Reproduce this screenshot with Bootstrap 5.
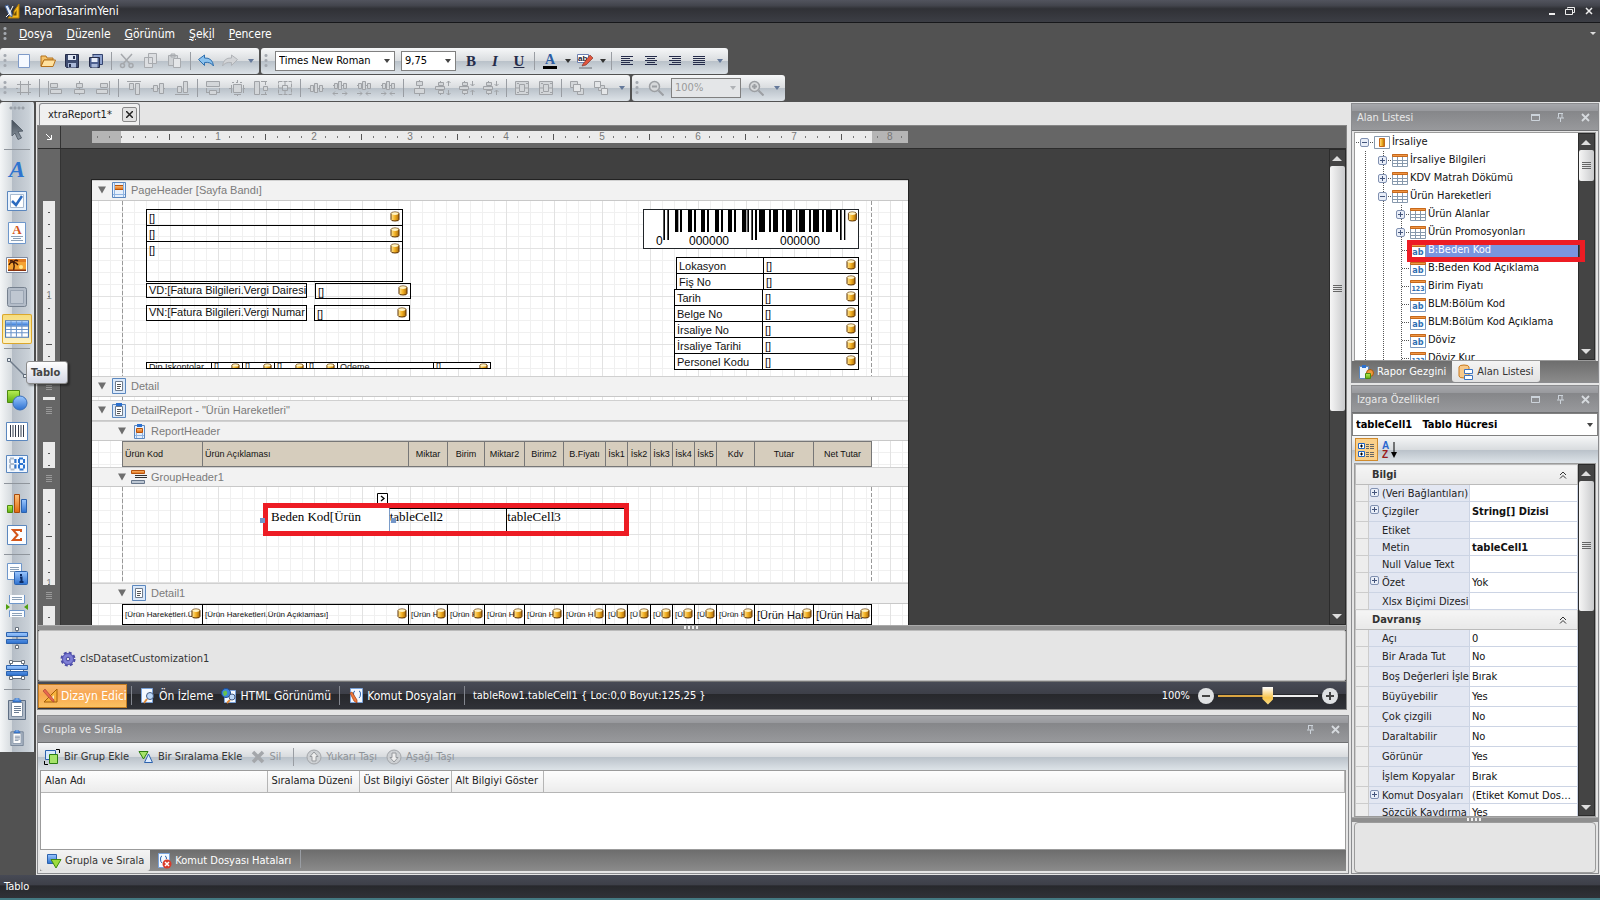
<!DOCTYPE html>
<html lang="tr">
<head>
<meta charset="utf-8">
<meta name="viewport" content="width=device-width, initial-scale=1">
<title>RaporTasarimYeni</title>
<link href="https://cdn.jsdelivr.net/npm/bootstrap@5.3.0/dist/css/bootstrap.min.css" rel="stylesheet">
<style>
:root{--ui:"DejaVu Sans Condensed","Noto Sans",sans-serif;--bar:linear-gradient(#f6f7f8,#d9dcdf 50%,#b9c1c9 51%,#dde3e8);--darkbar:linear-gradient(#474a55,#3d3f48 45%,#27282c 46%,#303238)}
body{font-family:var(--ui);font-size:11px;line-height:16px;color:#222;background:#525252;height:100vh;overflow:hidden}
svg{display:block;flex:none}
.minh0{min-height:0}.minw0{min-width:0}
.i16{width:16px;height:16px}.i22{width:22px;height:22px}.i24{width:24px;height:24px}.i14{width:14px;height:14px}
.app-title,.menu-row,.tool-row,.status,.tabstrip,.ruler-row,.split,.tray,.modes,.grouping,.fields,.phead,.btnbar,.desc,.ptabs,.objsel{flex:none}
.app-title{height:23px;background:linear-gradient(#52545e,#43454d 25%,#303136 40%,#3c3e45);border-bottom:1px solid #17181b;color:#fff;font-size:12px}
.menu-row{height:25px;background:#525252;font-size:12px}
.menu-row a{color:#fff;text-decoration:none;padding:0 7px}
.tool-row{height:27px;gap:2px}
.tb{height:26px;background:var(--bar);border-radius:3px}
.tb .btn,.toolbox .btn{padding:0;border:0;border-radius:2px;width:24px;height:24px;display:flex;align-items:center;justify-content:center;color:#252c4a;font-family:"Liberation Serif",serif;font-size:15px;line-height:20px;font-weight:700}
.tb .drop{width:11px}.tb .more{width:17px}
.grip{width:12px;flex:none;height:16px;background:radial-gradient(circle,#a4a9b0 1px,transparent 2px) 3px 0/4px 5px repeat-y}
.grip14{width:14px}
.vsep{width:7px;height:18px;flex:none;background:linear-gradient(#999da3,#999da3) 3px 0/1px 100% no-repeat}
.sel{appearance:none;border:1px solid #808080;border-radius:0;background:#fff url("data:image/svg+xml,%3Csvg xmlns='http://www.w3.org/2000/svg' width='6' height='4'%3E%3Cpath d='M0 0h6L3 4z' fill='%23444'/%3E%3C/svg%3E") no-repeat right 4px center;font:11px/16px var(--ui);color:#000;padding:0 14px 0 3px;height:20px;outline:0}
.sel.dim{background:#e4e6e8 url("data:image/svg+xml,%3Csvg xmlns='http://www.w3.org/2000/svg' width='6' height='4'%3E%3Cpath d='M0 0h6L3 4z' fill='%23b0b3b7'/%3E%3C/svg%3E") no-repeat right 4px center;color:#9a9a9a}
.w120{width:120px}.w55{width:55px;margin:0 3px 0 6px}.w70{width:70px;margin:0 3px}
.toolbox{width:36px;height:650px;background:linear-gradient(90deg,#f4f6f7,#d5dade 35%,#b5bdc6 36%,#cad1d8 85%,#dfe5ea);border-right:2px solid #4d4d4d;border-radius:3px 3px 0 0;flex:none}
.toolbox .btn{width:30px;height:30px;margin:1px 0 1px 2px;flex:none}
.toolbox .btn.last{height:24px}
.toolbox .btn.on{background:linear-gradient(#f6dc7c,#fff3c4);box-shadow:inset 0 0 0 1px #dba72c}
.hgrip{height:12px;flex:none;background:radial-gradient(circle,#99a0a8 1px,transparent 2px) 0 4px/4px 4px repeat-x;width:16px;margin-left:9px}
.hsep{height:7px;flex:none;margin:0 4px;background:linear-gradient(#8f959c,#8f959c) 0 3px/100% 1px no-repeat}
.work{background:#e5e5e5}
.center{padding:0 2px 1px 1px}
.tabstrip{height:23px;padding-left:2px}
.doctab{width:101px;height:22px;background:#f0f0f0;border:1px solid #8a8c90;border-bottom:0;border-radius:3px 3px 0 0;padding:0 2px 0 8px;margin-top:1px}
.doctab .btn{padding:0;width:15px;height:15px;border:1px solid #888;border-radius:2px;background:#e2e2e2;display:flex;align-items:center;justify-content:center}
.docframe{border:1px solid #858585;background:#404040;margin-right:2px}
.ruler-row{height:23px;background:#666;border-bottom:1px solid #2c2c2c}
.corner{width:23px;background:#777;border-right:1px solid #333;flex:none}
.hrule{margin-left:31px;width:816px;height:12px;color:#777;font:10px/12px "Liberation Sans",sans-serif;padding-left:78px;background:linear-gradient(90deg,transparent 47px,#555 47px,#555 48px,transparent 48px) 30px 3px/96px 6px repeat-x,linear-gradient(90deg,transparent 11px,#777 11px) 30px 5px/12px 2px repeat-x,linear-gradient(90deg,#b5b5b5 29px,#ebebeb 29px,#ebebeb 780px,#b5b5b5 780px)}
.hrule span{width:96px;text-align:center;flex:none}
.hrule b{font-weight:400;background:#ebebeb;padding:0 2px}
.hrule span:last-child{width:60px;text-align:left;padding-left:43px}.hrule span:last-child b{background:#b5b5b5}
.vrule{width:23px;background:#666;border-right:1px solid #333;flex:none;padding:52px 5px 0;overflow:hidden}
.vseg{width:12px;color:#888;font:10px/12px "Liberation Sans",sans-serif;text-align:center;overflow:hidden;background:linear-gradient(transparent 47px,#555 47px,#555 48px,transparent 48px) 3px 0/6px 96px repeat-y,linear-gradient(transparent 11px,#555 11px) 5px 0/2px 12px repeat-y,#ebebeb}
.vseg b{display:block;font-weight:400;padding-top:89px}
.ham{width:6px;margin:0 3px;background:repeating-linear-gradient(#999 0 1px,transparent 1px 2px) center/6px 7px no-repeat}
.z175{height:175px}.z21{height:21px}.z3{height:3px}.z26{height:26px}.z96{height:96px}
.canvas{background:#404040;overflow:hidden}
.sheet{width:816px;margin:31px 0 0 31px;background:#fff;box-shadow:0 0 0 1px #222;font-family:"Liberation Sans",sans-serif;color:#111}
.band{height:21px;background:#f2f2f2;border-bottom:1px solid #c8c8c8;border-top:1px solid #d0d0d0;padding:0 0 1px 6px;color:#7b7b7b;font-size:11px;line-height:18px;display:flex;align-items:center;gap:5px}
.band .i16{margin-right:-1px}
.band.sub{padding-left:26px}
.b20{height:20px}
.zone{position:relative;background:repeating-linear-gradient(#999 0 4px,transparent 4px 6px) 30px 0/1px 100% no-repeat,repeating-linear-gradient(#999 0 4px,transparent 4px 6px) 779px 0/1px 100% no-repeat,linear-gradient(90deg,#e2e2e2 1px,transparent 1px) 30px 0/48px 48px,linear-gradient(transparent 47px,#e2e2e2 47px) 0 0/48px 48px,linear-gradient(90deg,#f0f0f0 1px,transparent 1px) 30px 0/12px 12px,linear-gradient(transparent 11px,#f0f0f0 11px) 0 0/12px 12px,#fff}
.ctl{position:absolute;border:1px solid #000;display:flex;justify-content:space-between;align-items:flex-start;padding:1px 2px;overflow:hidden;white-space:nowrap;font-size:11px;line-height:14px}
.ctl.tight{padding:0 0 0 2px;line-height:12px}
.ctl svg,.info svg{width:10px;height:11px}
.dip{border:1px solid #000;height:7px;overflow:hidden;background:#fff}
.dc{font-size:9px;line-height:8px;border-right:1px solid #000;display:flex;justify-content:space-between;padding:0 2px;white-space:nowrap;overflow:hidden}
.dc:last-child{border-right:0}.dc svg{width:9px;height:10px}
.rtab{table-layout:fixed;width:749px;margin-left:30px;border-collapse:collapse}
.rtab td,.rtab th{border:1px solid #000;padding:0 2px;overflow:hidden;white-space:nowrap;font-weight:400;vertical-align:middle;text-align:center;font-size:9px;line-height:14px}
.rtab th{background:#d6cdbd;border-color:#777;height:25px}
.rtab th:nth-child(n+8){padding:0}
.rtab th:nth-child(-n+2),.rtab td{text-align:left}
.rtab td{height:20px;font-size:8px;padding:0 1px 0 2px}
.rtab td:nth-last-child(-n+2){font-size:11px}
.rtab td svg{width:10px;height:11px;margin-left:-10px;position:relative}
.rtab td .d-flex span{overflow:hidden;min-width:0}
.rtab col:nth-child(1){width:80px}.rtab col:nth-child(2){width:206px}.rtab col:nth-child(3),.rtab col:nth-child(6){width:39px}.rtab col:nth-child(4){width:37px}.rtab col:nth-child(5){width:40px}.rtab col:nth-child(7){width:42px}.rtab col:nth-child(n+8){width:22px}.rtab col:nth-child(9){width:23px}.rtab col:nth-child(13){width:38px}.rtab col:nth-child(14){width:59px}.rtab col:nth-child(15){width:58px}
.info{table-layout:fixed;border-collapse:collapse;position:absolute;background:#fff;font-size:11px;line-height:14px}
.info td{border:1px solid #000;height:16px;padding:0 2px;overflow:hidden;white-space:nowrap}
.redbox{position:absolute;border:5px solid #ed1c24;z-index:3;pointer-events:none}
.tcells{position:absolute;left:176px;top:21px;width:356px;height:24px;font:13px/16px "Liberation Serif",serif;color:#000}
.tcells div{width:118px;border-top:1px solid #000;border-left:1px solid #000;white-space:nowrap}
.tcells div:first-child{width:121px;background:#fff;border-color:#fff;padding-left:2px}
.tcells div:nth-child(2){border-left-color:#7a9cc9}
.hnd{position:absolute;width:5px;height:5px;background:#7396c8;z-index:4}
.sb{width:17px;background:#444;border:1px solid #2b2b2b;flex:none}
.sb .arr{height:16px;display:flex;align-items:center;justify-content:center}
.thumb{background:linear-gradient(90deg,#f6f6f6,#c9cacc);border-radius:2px;display:flex;align-items:center;justify-content:center}
.thumb::after{content:"";width:9px;height:8px;background:repeating-linear-gradient(#666 0 1px,transparent 1px 2px)}
.t245{height:245px}.t31{height:31px}.t130{height:130px}
.split{height:5px;background:#8f8f8f;border-top:1px solid #aaa}
.split i{display:block;width:16px;height:3px;margin:0 auto;background:repeating-linear-gradient(90deg,#eee 0 2px,transparent 2px 4px)}
.tray{height:51px;background:#e5e5e5;border:1px solid #bbb;border-radius:2px;padding:20px 0 0 21px;color:#333}
.modes{height:28px;background:var(--darkbar);color:#fff;border-top:1px solid #777}
.modes .btn{padding:0;border:0;border-radius:0;color:#fff;font:12px/16px var(--ui);display:flex;align-items:center;gap:3px;white-space:nowrap}
.modes .btn.on{background:linear-gradient(#f6b877,#f8a64e 45%,#fbc463);box-shadow:inset 0 0 0 1px #c47d22;height:24px;width:89px;padding-left:4px}
.modes .bar{width:1px;height:19px;background:#83868e}
.modes .round{width:16px;height:16px;border-radius:50%;background:#dfe1e3;justify-content:center}
.zoomr{appearance:none;width:100px;height:20px;margin:0;background:linear-gradient(90deg,#d9a441 50%,#eee 50%) center/100% 2px no-repeat}
.zoomr::-webkit-slider-thumb{appearance:none;width:11px;height:18px;background:linear-gradient(#fff,#f7c44a 60%,#fbe08e);clip-path:polygon(0 0,100% 0,100% 70%,50% 100%,0 70%)}
.pane{border:1px solid #8b8c8f;background:#e5e5e5}
.phead{height:27px;background:linear-gradient(#a6a7ab,#999a9e 25%,#858689 26%,#98999c);border-bottom:1px solid #6f7072;color:#e9e9e9;padding:1px 8px 0 5px}
.btnbar{height:27px;background:var(--bar);color:#333}
.btnbar .btn{padding:0;border:0;font:11px/16px var(--ui);color:#333;display:flex;gap:4px;align-items:center;border-radius:0}
.btnbar .btn:disabled{color:#8f9398;opacity:1}
.btnbar .sorton{background:#fbd08a;box-shadow:0 0 0 1px #d08a2c;width:21px;height:21px;justify-content:center}
.actions{gap:9px;padding-left:6px}
.inset{border:1px solid #9b9b9b;margin:0 2px}
.grouping{height:159px;margin-top:5px}
.grp{border-collapse:collapse;width:100%;table-layout:fixed}
.grp th{height:21px;font-weight:400;border:1px solid #b5b5b5;border-left:0;border-top:0;background:linear-gradient(#fdfdfd,#ececec);padding:0 4px;white-space:nowrap}
.grp th:nth-child(1){width:226px}.grp th:nth-child(2),.grp th:nth-child(3),.grp th:nth-child(4){width:92px}
.ptabs{background:linear-gradient(#6d6d6d,#8b8b8b)}
.grouping .ptabs{margin:0 2px 2px}
.ptabs .btn{padding:0 6px;border:0;font:11px/16px var(--ui);color:#fff;display:flex;gap:3px;align-items:center;height:21px;border-radius:0 0 3px 3px;white-space:nowrap}
.ptabs .btn.on{background:linear-gradient(#f4f4f4,#e2e2e2);color:#333}
.side{width:249px;flex:none;padding:1px 1px 1px 0}
.fields{height:280px;margin-bottom:2px}
.treebox{margin-top:1px}
.tree{list-style:none;margin:0;padding:0 0 0 1px;background:#fff;overflow:hidden;color:#111}
.tree li{display:flex;height:18px;align-items:center;white-space:nowrap}
.tree i{width:18px;height:18px;flex:none;display:flex;align-items:center;justify-content:center}
.tree .v{background:linear-gradient(#555 50%,transparent 50%) 9px 0/1px 2px repeat-y}
.tree .h{background:linear-gradient(90deg,#555 50%,transparent 50%) 10px 9px/2px 1px repeat-x}
.tree .vh{background:linear-gradient(#555 50%,transparent 50%) 9px 0/1px 2px repeat-y,linear-gradient(90deg,#fff 9px,transparent 9px) 0 9px/100% 1px,repeating-linear-gradient(90deg,#555 0 1px,#fff 1px 2px) 0 9px/100% 1px no-repeat}
.tree svg.i16{width:16px}
.tree span{padding-left:2px}
.tree .chosen{background:#7a95df;color:#fff;flex:1;line-height:14px}
.objsel{height:23px;font-weight:700}
.desc{height:51px}
.pg{table-layout:fixed;border-collapse:collapse;width:100%;color:#111;line-height:15px}
.pg td,.pg th{padding:0 2px;border:1px solid #ccd4e4;overflow:hidden;white-space:nowrap;text-overflow:ellipsis;vertical-align:middle;font-weight:400;text-align:left}
.pg .ind{background:#ededed;border-color:#ccc}
.pg th{background:#e3e7f2;padding:0 0 0 13px;text-overflow:clip;position:relative;color:#222}
.pg th svg{position:absolute;left:1px;top:3px}
.pg .cat td{background:linear-gradient(#f5f5f5,#e9e9e9);border-color:#bbb;font-weight:700;color:#333;padding-left:16px}
.pg col:nth-child(1){width:13px}.pg col:nth-child(2){width:101px}
.r17{height:17px}.r20{height:20px}
.status{height:25px;background:var(--darkbar);border-bottom:2px solid #447a83;color:#fff;padding:4px}
.tip{position:absolute;left:26px;top:259px;z-index:5;background:linear-gradient(#fff,#d3d7e4);border:1px solid #8b8b8b;border-radius:3px;font-weight:700;color:#444;padding:3px 4px;width:42px;box-shadow:2px 2px 2px #0005;height:23px}
</style>
</head>
<body class="d-flex flex-column">
<svg width="0" height="0" class="position-absolute" aria-hidden="true">
<defs>
<linearGradient id="gb" x2="0" y2="1"><stop stop-color="#9cc8ff"/><stop offset="1" stop-color="#2c70cf"/></linearGradient>
<linearGradient id="gy"><stop stop-color="#ffe79a"/><stop offset=".5" stop-color="#f3b021"/><stop offset="1" stop-color="#a8690b"/></linearGradient>
<linearGradient id="go" x2="0" y2="1"><stop stop-color="#ffc27a"/><stop offset="1" stop-color="#df6a10"/></linearGradient>
<linearGradient id="gg" x2="0" y2="1"><stop stop-color="#b8ef55"/><stop offset="1" stop-color="#5fae12"/></linearGradient>
<linearGradient id="ga" x2="0" y2="1"><stop stop-color="#3f4954"/><stop offset="1" stop-color="#8f99a4"/></linearGradient>
</defs>
<symbol id="db" viewBox="0 0 10 11"><path d="M1 2.500Q1 1 5 1t4 1.500v6Q9 10 5 10T1 8.500z" fill="url(#gy)" stroke="#5c3306"/><ellipse cx="5" cy="2.600" rx="3.400" ry="1.300" fill="#fff3c4"/></symbol>
<symbol id="tri" viewBox="0 0 8 8"><path d="M0 0.500h8L4 7.500z" fill="#6e6e6e"/></symbol>
<symbol id="car" viewBox="0 0 6 4"><path d="M0 0h6L3 4z" fill="#333"/></symbol>
<symbol id="carb" viewBox="0 0 6 4"><path d="M0 0h6L3 4z" fill="#64789a"/></symbol>
<symbol id="up" viewBox="0 0 10 5"><path d="M0 5h10L5 0z" fill="#ddd"/></symbol>
<symbol id="dn" viewBox="0 0 10 5"><path d="M0 0h10L5 5z" fill="#ddd"/></symbol>
<symbol id="logo" viewBox="0 0 16 16"><path d="M15 1v14H4l3-3h3V8z" fill="#f5b81c" stroke="#b47b05"/><path d="M12.500 7v5.500H9.500z" fill="#6b4a05"/><path d="m1 3 3-1 4 9v3l-3-2z" fill="#dfe9f5" stroke="#3d5c93"/><path d="m9 3-4 8-3 3" stroke="#fff" fill="none"/></symbol>
<symbol id="new" viewBox="0 0 16 16"><path d="M2.500 1.500h11v13h-11z" fill="#f5f9ff" stroke="#7e9ac8"/></symbol>
<symbol id="open" viewBox="0 0 16 16"><path d="M1 13V3h5l1 2h6v2H4z" fill="#f5c36a" stroke="#b5721c"/><path d="M1 13.500 4 7h11.500L13 13.500z" fill="#ffe2a0" stroke="#b5721c"/></symbol>
<symbol id="save" viewBox="0 0 16 16"><path d="M1.500 1.500h13v13h-12l-1-1z" fill="#3e4c70" stroke="#252c48"/><path d="M4 2h8v5H4z" fill="#dfe6f3"/><path d="M9 3h2v3H9z" fill="#26304e"/><path d="M4 10h8v4.500H4z" fill="#a9b8d8"/><path d="M5 11h2v3H5z" fill="#26304e"/></symbol>
<symbol id="saveall" viewBox="0 0 16 16"><path d="M4.500 1.500h10v10H12M5 4V1.500" fill="#8fa3cf" stroke="#33436e"/><path d="M1.500 4.500h10v10h-9l-1-1z" fill="#4d6090" stroke="#252c48"/><path d="M3.500 5h6v4h-6z" fill="#e7edf8"/><path d="M3.500 11h6v3.500h-6z" fill="#a9b8d8"/></symbol>
<symbol id="cut" viewBox="0 0 16 16"><path d="m2 1 9 10M13 1 4 11" stroke="#a5a8ac" stroke-width="1.500"/><circle cx="3.500" cy="12.500" r="2" fill="none" stroke="#a5a8ac" stroke-width="1.500"/><circle cx="12" cy="12.500" r="2" fill="none" stroke="#a5a8ac" stroke-width="1.500"/></symbol>
<symbol id="copy" viewBox="0 0 16 16"><path d="M5.500.5h8v10h-8zM1.500 4.500h8v10h-8z" fill="#dcdee1" stroke="#a8abaf"/></symbol>
<symbol id="paste" viewBox="0 0 16 16"><path d="M1.500 2.500h9v10h-9zM4 1h4v3H4z" fill="#cfd2d5" stroke="#a8abaf"/><path d="M6.500 5.500h7v9h-7z" fill="#e4e6e8" stroke="#a8abaf"/></symbol>
<symbol id="undo" viewBox="0 0 16 16"><path d="m.5 6.500 6-4.500v3q8-.5 9 8-3-4.500-9-3.500v3z" fill="#8bc2ee" stroke="#2e6fae"/></symbol>
<symbol id="redo" viewBox="0 0 16 16"><path d="m15.500 6.500-6-4.500v3q-8-.5-9 8 3-4.500 9-3.500v3z" fill="#d2d4d7" stroke="#b0b3b7"/></symbol>
<symbol id="al" viewBox="0 0 14 14"><path d="M1 2.500h12M1 4.500h9M1 6.500h12M1 8.500h9M1 10.500h12" stroke="#252c4a"/></symbol>
<symbol id="ac" viewBox="0 0 14 14"><path d="M1 2.500h12M3 4.500h8M1 6.500h12M3 8.500h8M1 10.500h12" stroke="#252c4a"/></symbol>
<symbol id="ar" viewBox="0 0 14 14"><path d="M1 2.500h12M4 4.500h9M1 6.500h12M4 8.500h9M1 10.500h12" stroke="#252c4a"/></symbol>
<symbol id="aj" viewBox="0 0 14 14"><path d="M1 2.500h12M1 4.500h12M1 6.500h12M1 8.500h12M1 10.500h12" stroke="#252c4a"/></symbol>
<symbol id="g1" viewBox="0 0 16 16"><g fill="#d3d6d9" stroke="#a0a3a7"><path d="M4.500 4.500h8v8h-8z"/><path d="M4.500 1v14M12.500 1v14M1 4.500h14M1 12.500h14M0 8.500h2"/></g></symbol>
<symbol id="g2" viewBox="0 0 16 16"><g fill="#d3d6d9" stroke="#a0a3a7"><path d="M1.500 1v14"/><path d="M3.500 3.500h7v4h-7zM3.500 9.500h11v4h-11z"/></g></symbol>
<symbol id="g3" viewBox="0 0 16 16"><g fill="#d3d6d9" stroke="#a0a3a7"><path d="M8.500 1v14"/><path d="M5.500 3.500h6v4h-6zM3.500 9.500h10v4h-10z"/></g></symbol>
<symbol id="g4" viewBox="0 0 16 16"><g fill="#d3d6d9" stroke="#a0a3a7"><path d="M14.500 1v14"/><path d="M5.500 3.500h7v4h-7zM1.500 9.500h11v4h-11z"/></g></symbol>
<symbol id="g5" viewBox="0 0 16 16"><g fill="#d3d6d9" stroke="#a0a3a7"><path d="M1 1.500h14"/><path d="M3.500 3.500h4v6h-4zM9.500 3.500h4v11h-4z"/></g></symbol>
<symbol id="g6" viewBox="0 0 16 16"><g fill="#d3d6d9" stroke="#a0a3a7"><path d="M1 8.500h14"/><path d="M3.500 5.500h4v6h-4zM9.500 3.500h4v10h-4z"/></g></symbol>
<symbol id="g7" viewBox="0 0 16 16"><g fill="#d3d6d9" stroke="#a0a3a7"><path d="M1 14.500h14"/><path d="M3.500 6.500h4v6h-4zM9.500 1.500h4v11h-4z"/></g></symbol>
<symbol id="g8" viewBox="0 0 16 16"><g fill="#d3d6d9" stroke="#a0a3a7"><path d="M1.500 1.500h13v5h-13zM4.500 10.500h7v4h-7z"/><path d="M1.500 8v5M14.500 8v5M2 12.500h2M12 12.500h2"/></g></symbol>
<symbol id="g9" viewBox="0 0 16 16"><g fill="#d3d6d9" stroke="#a0a3a7"><path d="M4.500 4.500h8v8h-8z"/><path d="M3 2.500h2m2 0h2m2 0h2M8.500 0v3m0 11v2M0 8.500h3m11 0h2M2.500 5v8M14.500 5v8M5 14.500h7"/></g></symbol>
<symbol id="g10" viewBox="0 0 16 16"><g fill="#d3d6d9" stroke="#a0a3a7"><path d="M1.500 1.500h5v13h-5zM10.500 6.500h4v4h-4z"/><path d="M8 1.500h6M8 14.500h6M12.500 2v3m0 7v2"/></g></symbol>
<symbol id="g11" viewBox="0 0 16 16"><g fill="none" stroke="#a0a3a7"><path d="M1.500 1.500h13v13h-13z" stroke-dasharray="4 1"/><path d="M5.500 5.500h5v5h-5zM8 2v3M8 11v3M2 8h3M11 8h3"/></g></symbol>
<symbol id="g12" viewBox="0 0 16 16"><g fill="#d3d6d9" stroke="#a0a3a7"><path d="M0 8.500h16"/><path d="M2.500 5.500h3v6h-3zM6.500 3.500h3v9h-3zM11.500 5.500h3v6h-3z"/></g></symbol>
<symbol id="g13" viewBox="0 0 16 16"><g fill="#d3d6d9" stroke="#a0a3a7"><path d="M1 5.500h14"/><path d="M2.500 3.500h3v5h-3zM6.500 1.500h3v8h-3zM11.500 3.500h3v5h-3z"/><path d="M1 13.500h5m4 0h5M3 11.500l-2 2 2 2m10-4 2 2-2 2" fill="none"/></g></symbol>
<symbol id="g13b" viewBox="0 0 16 16"><g fill="#d3d6d9" stroke="#a0a3a7"><path d="M1 5.500h14"/><path d="M2.500 3.500h3v5h-3zM6.500 1.500h3v8h-3zM11.500 3.500h3v5h-3z"/><path d="M1 13.500h5m4 0h5M4 11.500l2 2-2 2m8-4-2 2 2 2" fill="none"/></g></symbol>
<symbol id="g14" viewBox="0 0 16 16"><g fill="#d3d6d9" stroke="#a0a3a7"><path d="M8.500 0v16"/><path d="M5.500 1.500h6v4h-6zM3.500 8.500h10v5h-10z"/></g></symbol>
<symbol id="g15" viewBox="0 0 16 16"><g fill="#d3d6d9" stroke="#a0a3a7"><path d="M5.500 1v14"/><path d="M3.500 2.500h5v3h-5zM.5 6.500h9v3h-9zM3.500 10.500h5v3h-5z"/><path d="M13.500 1v5m0 4v5m-2-12 2-2 2 2m-4 10 2 2 2-2" fill="none"/></g></symbol>
<symbol id="g15b" viewBox="0 0 16 16"><g fill="#d3d6d9" stroke="#a0a3a7"><path d="M5.500 1v14"/><path d="M3.500 2.500h5v3h-5zM.5 6.500h9v3h-9zM3.500 10.500h5v3h-5z"/><path d="M13.500 1v5m0 4v5m-2-11 2 2 2-2m-4 8 2-2 2 2" fill="none"/></g></symbol>
<symbol id="g16" viewBox="0 0 16 16"><g fill="#d3d6d9" stroke="#a0a3a7"><path d="M1.500 1.500h13v13h-13z"/><path d="M5.500 4.500h5v7h-5zM3 3.500h2m7 0h2M3 12.500h2m7 0h2M2 8h3m6 0h3"/></g></symbol>
<symbol id="g17" viewBox="0 0 16 16"><g fill="#d3d6d9" stroke="#a0a3a7"><path d="M1.500 1.500h7v6h-7zM8.500 8.500h6v6h-6z"/><path d="M4.500 4.500h7v7h-7z" fill="#e4e6e8"/></g></symbol>
<symbol id="g18" viewBox="0 0 16 16"><g fill="#d3d6d9" stroke="#a0a3a7"><path d="M5.500 5.500h6v5h-6z"/><path d="M1.500 1.500h6v6h-6zM8.500 8.500h6v6h-6z" fill="#e4e6e8"/></g></symbol>
<symbol id="zo" viewBox="0 0 16 16"><circle cx="6.500" cy="6.500" r="5" fill="#d6d8da" stroke="#9c9fa3" stroke-width="1.500"/><path d="M4 6.500h5M10.500 10.500l5 5" stroke="#9c9fa3" stroke-width="2"/></symbol>
<symbol id="zi" viewBox="0 0 16 16"><circle cx="6.500" cy="6.500" r="5" fill="#d6d8da" stroke="#9c9fa3" stroke-width="1.500"/><path d="M4 6.500h5M6.500 4v5M10.500 10.500l5 5" stroke="#9c9fa3" stroke-width="2"/></symbol>
<symbol id="t-arrow" viewBox="0 0 22 22"><path d="m6 1 11 11-5 .5 3.500 6.500-3.500 1.500-3-6.500-3 3z" fill="url(#ga)" stroke="#59636e"/></symbol>
<symbol id="t-check" viewBox="0 0 22 22"><path d="M1.500 1.500h19v19h-19z" fill="#eaf3fd" stroke="#5b87be"/><path d="M4.500 4.500h13v13h-13z" fill="#fff" stroke="#a9bbd0"/><path d="m6 11 4 4 6-9" fill="none" stroke="#2b6bc0" stroke-width="2.500"/></symbol>
<symbol id="t-label" viewBox="0 0 22 22"><path d="M2.500.5h17v21h-17z" fill="#fbfdff" stroke="#6e97cb"/><path d="M5 14.500h12M7 16.500h8M5 18.500h12" stroke="#8ba0b7"/></symbol>
<symbol id="t-pic" viewBox="0 0 22 22"><path d="M.5 3.500h21v15H.5z" fill="#fff" stroke="#7e8aa0"/><path d="M2 5h18v12H2z" fill="#f5a233"/><path d="M2 5h18v3H2z" fill="#e07a20"/><path d="M7.500 17q1.500-5 0-9M3 11q2-4 4.500-2.500M4 7q3-1 3.500 1.500Q9 5 12 7M7.500 8.500Q10 8 12 11" stroke="#441a08" fill="none" stroke-width="1.400"/><path d="M2 15.500h18V17H2z" fill="#8b3410"/><circle cx="15" cy="13" r="2" fill="#ffe58a"/></symbol>
<symbol id="t-panel" viewBox="0 0 22 22"><rect x="1.500" y="1.500" width="19" height="19" rx="2" fill="#b3bcc8" stroke="#76818f"/><path d="M4.500 4.500h13v13h-13z" fill="#bfc7d1" stroke="#9aa5b3"/></symbol>
<symbol id="t-table" viewBox="0 0 22 22"><path d="M.5 3.500h21v15H.5z" fill="#fff" stroke="#4b78b5"/><path d="M1 4h20v4H1z" fill="url(#gb)"/><path d="M5.500 4v14M10.500 4v14M15.500 4v14M1 8.500h20M1 11.500h20M1 14.500h20" stroke="#6b94c9"/></symbol>
<symbol id="t-line" viewBox="0 0 22 22"><path d="m3 3 16 16" stroke="#6f7b89" stroke-width="1.500"/><path d="M1.500 1.500h3v3h-3zM17.500 17.500h3v3h-3z" fill="#e8edf2" stroke="#5d6977"/></symbol>
<symbol id="t-shape" viewBox="0 0 22 22"><path d="M1.500 1.500h12v12h-12z" fill="url(#gg)" stroke="#4c8a10"/><circle cx="14" cy="14" r="7" fill="url(#gb)" stroke="#3a6fb8"/></symbol>
<symbol id="t-bar" viewBox="0 0 22 22"><path d="M.5 1.500h21v18H.5z" fill="#fff" stroke="#5b87be"/><path d="M4.500 4v12M7 4v12M9.500 4v12M12.500 4v12M15 4v12M17.500 4v12" stroke="#333c4c"/></symbol>
<symbol id="t-zip" viewBox="0 0 22 22"><path d="M.5 2.500h21v17H.5z" fill="#f2f8ff" stroke="#5b87be"/><path d="M4 5.500h5v11H4zM4 11h5" fill="none" stroke="#aebccd" stroke-width="2" stroke-dasharray="4 1.500"/><path d="M13 5.500h5v11h-5zM13 11h5M9.500 6v10" fill="none" stroke="#2a73d0" stroke-width="2" stroke-dasharray="4 1.500"/></symbol>
<symbol id="t-chart" viewBox="0 0 22 22"><path d="M1.500 13.500h5v7h-5z" fill="url(#gg)" stroke="#4c8a10"/><path d="M8.500 2.500h5v18h-5z" fill="url(#go)" stroke="#a84a0a"/><path d="M15.500 7.500h5v13h-5z" fill="url(#gb)" stroke="#2c62ad"/></symbol>
<symbol id="t-sum" viewBox="0 0 22 22"><path d="M1.500 1.500h19v19h-19z" fill="#fbfdff" stroke="#5b87be"/><path d="M15 8V6H7l4.500 5L7 16h8v-2" fill="none" stroke="#d4561a" stroke-width="2"/></symbol>
<symbol id="t-info" viewBox="0 0 22 22"><path d="M1.500.5h14v16h-14z" fill="#fbfdff" stroke="#6e97cb"/><path d="M4 4.500h9M4 6.500h9M4 8.500h9" stroke="#8ba0b7"/><rect x="8.500" y="8.500" width="13" height="13" rx="1" fill="url(#gb)" stroke="#2c62ad"/><path d="M15 11v2M14 14.500h1.500V19M13.500 19h4" stroke="#0c2c66" stroke-width="2" fill="none"/></symbol>
<symbol id="t-break" viewBox="0 0 22 22"><path d="M3.500 0v8.500h15V0M3.500 22v-6.500h15V22" fill="#fbfdff" stroke="#6e97cb"/><path d="M6 2.500h10M6 4.500h10M6 18.500h10M6 20.500h10" stroke="#8ba0b7"/><path d="m0 9 4 3-4 3zM22 9l-4 3 4 3z" fill="#50a010"/></symbol>
<symbol id="t-xl" viewBox="0 0 22 22"><path d="M11 0v22" stroke="#66707c"/><path d="M.5 5.500h21v4H.5zM.5 12.500h21v4H.5z" fill="url(#gb)" stroke="#2c62ad"/><path d="M9.500.5h3v3h-3zM9.500 18.500h3v3h-3z" fill="#fff" stroke="#66707c"/></symbol>
<symbol id="t-xb" viewBox="0 0 22 22"><path d="M4.500 2.500h13v17h-13z" fill="#fff" stroke="#66707c"/><path d="M.5 6.500h21v4H.5zM.5 12.500h21v4H.5z" fill="url(#gb)" stroke="#2c62ad"/><path d="M3.500 1.500h3v3h-3zM15.500 1.500h3v3h-3zM3.500 17.500h3v3h-3zM15.500 17.500h3v3h-3z" fill="#fff" stroke="#66707c"/></symbol>
<symbol id="t-sub" viewBox="0 0 22 22"><path d="M2.500 2.500h17v19h-17z" fill="#aeb9c7" stroke="#5f6f84"/><path d="M5.500 4.500h11v14h-11z" fill="#fff" stroke="#7c8ca0"/><path d="M8 8.500h7M8 10.500h7M8 12.500h7M8 14.500h5" stroke="#6a7c93"/><path d="M7 4h8V2h-2V0H9v2H7z" fill="url(#gb)" stroke="#2c62ad" stroke-width=".6"/></symbol>
<symbol id="page" viewBox="0 0 16 16"><path d="M1.500.5h13v15h-13z" fill="#dbe9fa" stroke="#5b87be"/><path d="M4.500 3.500h7v9h-7z" fill="#fff" stroke="#6e7b8c"/><path d="M6 6.500h4M6 8.500h4M6 10.500h3" stroke="#555"/></symbol>
<symbol id="phd" viewBox="0 0 16 16"><path d="M1.500.5h13v15h-13z" fill="#e6f0fc" stroke="#5b87be"/><path d="M3.500 3.500h9v4h-9z" fill="url(#go)" stroke="#b7530c"/><path d="M3.500 1v14M12.500 1v14M2 12.500h12" stroke="#8fb4e2"/></symbol>
<symbol id="ghd" viewBox="0 0 16 16"><path d="M.5 1.500h13v3H.5z" fill="url(#go)" stroke="#b7530c"/><path d="M4 6.500h12M4 8.500h12" stroke="#333"/><path d="M.5 11.500h13v3H.5z" fill="#bcc6d2" stroke="#66758a"/></symbol>
<symbol id="clip" viewBox="0 0 16 16"><path d="M1.500 2.500h13v13h-13z" fill="#dbe9fa" stroke="#5b87be"/><path d="M4.500 4.500h7v9h-7z" fill="#fff" stroke="#6e7b8c"/><path d="M6 7.500h4M6 9.500h4M6 11.500h3" stroke="#555"/><path d="M5 1h6v3H5z" fill="#2c70cf"/></symbol>
<symbol id="clipo" viewBox="0 0 16 16"><path d="M3.500 2.500h10v13h-10z" fill="#e6f0fc" stroke="#5b87be"/><path d="M5.500 5.500h6v4h-6z" fill="url(#go)" stroke="#b7530c"/><path d="M5.500 10v5M11.500 10v5M4 12.500h9" stroke="#8fb4e2"/><path d="M6 1h5v3H6z" fill="#2c70cf"/></symbol>
<symbol id="tbl" viewBox="0 0 16 16"><path d="M.5 2.500h15v12H.5z" fill="#fff" stroke="#8799ad"/><path d="M.5 2.500h15v2H.5z" fill="url(#go)" stroke="#c8691a"/><path d="M5.500 5v9M10.500 5v9M1 8.500h14M1 11.500h14" stroke="#8799ad"/></symbol>
<symbol id="fld" viewBox="0 0 16 16"><path d="M.5 2.500h15v13H.5z" fill="#fff" stroke="#7d9ac0"/><path d="M.5 2.500h15v2H.5z" fill="url(#go)" stroke="#c8691a"/></symbol>
<symbol id="dsb" viewBox="0 0 16 16"><path d="M.5 2.500h15v12H.5z" fill="#fff" stroke="#8799ad"/><path d="M5.500 4.500h5v8h-5z" fill="url(#gy)" stroke="#c8691a"/></symbol>
<symbol id="ex+" viewBox="0 0 9 9"><rect x=".5" y=".5" width="8" height="8" rx="1.500" fill="#e9eef8" stroke="#8090b0"/><path d="M2 4.500h5M4.500 2v5" stroke="#44557c"/></symbol>
<symbol id="ex-" viewBox="0 0 9 9"><rect x=".5" y=".5" width="8" height="8" rx="1.500" fill="#e9eef8" stroke="#8090b0"/><path d="M2 4.500h5" stroke="#44557c"/></symbol>
<symbol id="pin" viewBox="0 0 9 9"><path d="M2.500 0v4.500M2 .5h5M6 0v5M1 5h7M4.500 5v4" stroke="#ccd3da" fill="none"/></symbol>
<symbol id="cls" viewBox="0 0 9 9"><path d="m1 1 7 7M8 1 1 8" stroke="#d6dade" stroke-width="1.800"/></symbol>
<symbol id="max" viewBox="0 0 9 9"><path d="M.5 1.500h8v6h-8z" fill="none" stroke="#ccd3da"/><path d="M0 2h9" stroke="#ccd3da" stroke-width="2"/></symbol>
<symbol id="chev" viewBox="0 0 8 8"><path d="m1 4 3-3 3 3M1 7.500l3-3 3 3" stroke="#333" fill="none"/></symbol>
<symbol id="gear" viewBox="0 0 16 16"><circle cx="8" cy="8" r="6" fill="#7f7fd6" stroke="#4d4da5" stroke-width="3" stroke-dasharray="2.700 2.012"/><circle cx="8" cy="8" r="5.500" fill="#7f7fd6" stroke="#5656b0"/><circle cx="8" cy="8" r="1.800" fill="#e5e5e5" stroke="#44449a"/></symbol>
<symbol id="design" viewBox="0 0 16 16"><path d="M15 1v13H2z" fill="#f7b23c" stroke="#a35e08"/><path d="m12 7-4 4h4z" fill="#ffe9c0"/><path d="m1 3 2-2 9 11v2l-2-1z" fill="#e8654d" stroke="#a84a3a" stroke-width=".7"/></symbol>
<symbol id="prev" viewBox="0 0 16 16"><path d="M1.500.5h11v14h-11z" fill="#f4f9ff" stroke="#7aa3dc"/><circle cx="10" cy="8" r="3.500" fill="#bcd8f8" stroke="#445a80"/><path d="m7 11-3 4" stroke="#dd8a3a" stroke-width="2"/></symbol>
<symbol id="html" viewBox="0 0 16 16"><path d="M3.500 2.500h11v12h-11z" fill="#f4f9ff" stroke="#7aa3dc"/><circle cx="5" cy="5" r="4.500" fill="#3d87dd" stroke="#1c4c95"/><path d="M2 4q3-3 4 0t-3 4z" fill="#67c14b"/><circle cx="11" cy="9" r="3" fill="#bcd8f8" stroke="#445a80"/><path d="m9 12-3 3" stroke="#dd8a3a" stroke-width="2"/></symbol>
<symbol id="scr" viewBox="0 0 16 16"><path d="M2.500.5h12v14h-12z" fill="#f4f9ff" stroke="#7aa3dc"/><path d="M7 3Q5.500 3 5.500 6T7 10M11 3q1.500 0 1.500 3T11 10" stroke="#2c62ad" fill="none"/><path d="m2 5 2-1 5 8v3l-3-2z" fill="#ef7a3d" stroke="#a33d0c" stroke-width=".7"/></symbol>
<symbol id="scre" viewBox="0 0 16 16"><path d="M2.500.5h11v14h-11z" fill="#f4f9ff" stroke="#7aa3dc"/><path d="M6 3Q4.500 3 4.500 6T6 10M9 3q1.500 0 1.500 3" stroke="#2c62ad" fill="none"/><circle cx="11" cy="11" r="4.500" fill="#d93a2b"/><path d="m9 9 4 4M13 9l-4 4" stroke="#fff" stroke-width="1.500"/></symbol>
<symbol id="addg" viewBox="0 0 16 16"><path d="M1.500 1.500h10v9h-10z" fill="#d6e8fb" stroke="#2c62ad"/><path d="M5.500 5.500h8v9h-8z" fill="#a5e36a" stroke="#2b7d10"/><path d="M12 .5h3.500V4M.5 12v3.500H4" stroke="#000" fill="none"/></symbol>
<symbol id="adds" viewBox="0 0 16 16"><path d="M1 2.500h9L5.500 10z" fill="#a5e36a" stroke="#2b7d10"/><path d="M6.500 13.500h8L10.500 5z" fill="#dcebff" stroke="#2c62ad"/></symbol>
<symbol id="delx" viewBox="0 0 14 14"><path d="m2 2 10 10M12 2 2 12" stroke="#a4a7ab" stroke-width="3.500"/></symbol>
<symbol id="cu" viewBox="0 0 16 16"><circle cx="8" cy="8" r="7" fill="#cdd0d3" stroke="#a3a6aa"/><path d="m8 3 4 4.500h-2V12H6V7.500H4z" fill="#eee" stroke="#96999d"/></symbol>
<symbol id="cd" viewBox="0 0 16 16"><circle cx="8" cy="8" r="7" fill="#cdd0d3" stroke="#a3a6aa"/><path d="m8 13 4-4.500h-2V4H6v4.500H4z" fill="#eee" stroke="#96999d"/></symbol>
<symbol id="grp" viewBox="0 0 16 16"><path d="M1.500 1.500h9v9h-9z" fill="url(#gb)" stroke="#2c62ad"/><path d="M5 6.500h10L10 15z" fill="#9edc3c" stroke="#3f8a0e"/></symbol>
<symbol id="rg" viewBox="0 0 16 16"><path d="M1.500 2.500h9v12h-9z" fill="#eef5fd" stroke="#5b87be"/><path d="M4 1h4v3H4z" fill="#2c70cf"/><circle cx="12" cy="9" r="3.500" fill="#f09a3c" stroke="#a8590e"/><path d="M7.500 9.500h5v5h-5z" fill="url(#gg)" stroke="#4c8a10"/></symbol>
<symbol id="fl" viewBox="0 0 16 16"><path d="M1 3q0-2 5-2t5 2v9q0 2-5 2t-5-2z" fill="#f8c98a" stroke="#c8791c"/><path d="M6.500 5.500h8v4h-8zM6.500 11.500h8v4h-8z" fill="#fff" stroke="#3d74c2"/></symbol>
<symbol id="catg" viewBox="0 0 18 18"><path d="M1.500 2.500h6v5h-6zM1.500 10.500h6v5h-6z" fill="#fff" stroke="#1f63c4"/><path d="M3 5h3M4.500 3.500v3M3 13h3M4.500 11.500v3" stroke="#000"/><path d="M9 3.500h3m1 0h4M9 5.500h3m1 0h4M9 7.500h3m1 0h4M9 11.500h3m1 0h4M9 13.500h3m1 0h4M9 15.500h3m1 0h4" stroke="#666"/></symbol>
</svg>

<header class="app-title d-flex align-items-center ps-1 pe-1">
  <svg width="16" height="16"><use href="#logo"/></svg>
  <span class="ps-1 flex-grow-1">RaporTasarimYeni</span>
  <svg width="50" height="12" viewBox="0 0 50 12" stroke="#eee" fill="none"><path d="M3 9h6" stroke-width="2"/><path d="M21.500 3.500v-1h7v5h-2M19.500 4.500h7v5h-7z"/><path d="m40 3 6 6M46 3l-6 6" stroke-width="1.500"/></svg>
</header>
<nav class="menu-row d-flex align-items-center pe-1 pb-1">
  <span class="grip"></span>
  <a href="#"><u>D</u>osya</a><a href="#"><u>D</u>üzenle</a><a href="#"><u>G</u>örünüm</a><a href="#"><u>Ş</u>ek<u>i</u>l</a><a href="#"><u>P</u>encere</a>
  <svg class="ms-auto" width="6" height="3"><use href="#dn"/></svg>
</nav>
<div class="tool-row d-flex">
  <div class="tb d-flex align-items-center">
    <span class="grip"></span>
    <button class="btn" aria-label="Yeni"><svg class="i16"><use href="#new"/></svg></button><button class="btn" aria-label="Aç"><svg class="i16"><use href="#open"/></svg></button><button class="btn" aria-label="Kaydet"><svg class="i16"><use href="#save"/></svg></button><button class="btn" aria-label="Tümünü kaydet"><svg class="i16"><use href="#saveall"/></svg></button>
    <span class="vsep"></span>
    <button class="btn" aria-label="Kes"><svg class="i16"><use href="#cut"/></svg></button><button class="btn" aria-label="Kopyala"><svg class="i16"><use href="#copy"/></svg></button><button class="btn" aria-label="Yapıştır"><svg class="i16"><use href="#paste"/></svg></button>
    <span class="vsep"></span>
    <button class="btn" aria-label="Geri al"><svg class="i16"><use href="#undo"/></svg></button><button class="btn" aria-label="Yinele"><svg class="i16"><use href="#redo"/></svg></button>
    <button class="btn more" aria-label="Seçenekler"><svg width="6" height="4"><use href="#carb"/></svg></button>
  </div>
  <div class="tb d-flex align-items-center">
    <span class="grip grip14"></span>
    <select class="sel w120" aria-label="Yazı tipi"><option>Times New Roman</option></select>
    <select class="sel w55" aria-label="Boyut"><option>9,75</option></select>
    <button class="btn">B</button><button class="btn"><i>I</i></button><button class="btn"><u>U</u></button>
    <span class="vsep"></span>
    <button class="btn" aria-label="Yazı rengi"><svg class="i16" viewBox="0 0 16 16"><text x="8" y="11" text-anchor="middle" font-size="14" font-weight="700" fill="#2b5da3">A</text><path d="M1 13h14v3H1z"/></svg></button><button class="btn drop" aria-label="Renk seç"><svg width="6" height="4"><use href="#car"/></svg></button>
    <button class="btn" aria-label="Arka plan"><svg class="i16" viewBox="0 0 16 16"><path d="M.5 1.500h11v8H.5z" fill="#fff" stroke="#6c7fb0"/><text x="1" y="8" font-family="Liberation Sans" font-size="8" font-weight="700" fill="#223">ab</text><path d="M6 11 13 2l3 3-7 7-4 1z" fill="#e0553d" stroke="#7a2a20" stroke-width=".6"/><path d="M2 14h13v2H2z" fill="#9aa0a6"/></svg></button><button class="btn drop" aria-label="Arka plan seç"><svg width="6" height="4"><use href="#car"/></svg></button>
    <span class="vsep"></span>
    <button class="btn" aria-label="Sola"><svg class="i14"><use href="#al"/></svg></button><button class="btn" aria-label="Ortala"><svg class="i14"><use href="#ac"/></svg></button><button class="btn" aria-label="Sağa"><svg class="i14"><use href="#ar"/></svg></button><button class="btn" aria-label="İki yana"><svg class="i14"><use href="#aj"/></svg></button>
    <button class="btn more" aria-label="Seçenekler"><svg width="6" height="4"><use href="#carb"/></svg></button>
  </div>
</div>
<div class="tool-row d-flex">
  <div class="tb d-flex align-items-center">
    <span class="grip"></span>
    <button class="btn"><svg class="i16"><use href="#g1"/></svg></button><span class="vsep"></span>
    <button class="btn"><svg class="i16"><use href="#g2"/></svg></button><button class="btn"><svg class="i16"><use href="#g3"/></svg></button><button class="btn"><svg class="i16"><use href="#g4"/></svg></button><span class="vsep"></span>
    <button class="btn"><svg class="i16"><use href="#g5"/></svg></button><button class="btn"><svg class="i16"><use href="#g6"/></svg></button><button class="btn"><svg class="i16"><use href="#g7"/></svg></button><span class="vsep"></span>
    <button class="btn"><svg class="i16"><use href="#g8"/></svg></button><button class="btn"><svg class="i16"><use href="#g9"/></svg></button><button class="btn"><svg class="i16"><use href="#g10"/></svg></button><button class="btn"><svg class="i16"><use href="#g11"/></svg></button><span class="vsep"></span>
    <button class="btn"><svg class="i16"><use href="#g12"/></svg></button><button class="btn"><svg class="i16"><use href="#g13"/></svg></button><button class="btn"><svg class="i16"><use href="#g13b"/></svg></button><button class="btn"><svg class="i16"><use href="#g13b"/></svg></button><span class="vsep"></span>
    <button class="btn"><svg class="i16"><use href="#g14"/></svg></button><button class="btn"><svg class="i16"><use href="#g15"/></svg></button><button class="btn"><svg class="i16"><use href="#g15b"/></svg></button><button class="btn"><svg class="i16"><use href="#g15b"/></svg></button><span class="vsep"></span>
    <button class="btn"><svg class="i16"><use href="#g16"/></svg></button><button class="btn"><svg class="i16"><use href="#g16"/></svg></button><span class="vsep"></span>
    <button class="btn"><svg class="i16"><use href="#g17"/></svg></button><button class="btn"><svg class="i16"><use href="#g18"/></svg></button>
    <button class="btn more"><svg width="6" height="4"><use href="#carb"/></svg></button>
  </div>
  <div class="tb d-flex align-items-center">
    <span class="grip"></span>
    <button class="btn" aria-label="Uzaklaştır"><svg class="i16"><use href="#zo"/></svg></button>
    <select class="sel dim w70" aria-label="Yakınlık"><option>100%</option></select>
    <button class="btn" aria-label="Yakınlaştır"><svg class="i16"><use href="#zi"/></svg></button>
    <button class="btn more"><svg width="6" height="4"><use href="#carb"/></svg></button>
  </div>
</div>

<main class="d-flex flex-grow-1 position-relative minh0">
  <aside class="toolbox d-flex flex-column">
    <div class="hgrip"></div>
    <button class="btn"><svg class="i22"><use href="#t-arrow"/></svg></button>
    <div class="hsep"></div>
    <button class="btn"><svg class="i24" viewBox="0 0 24 24"><text x="12" y="20" text-anchor="middle" font-size="24" font-weight="700" font-style="italic" fill="#2f74cf">A</text></svg></button>
    <button class="btn"><svg class="i22"><use href="#t-check"/></svg></button>
    <button class="btn"><svg class="i22" viewBox="0 0 22 22"><use href="#t-label"/><text x="11" y="12" text-anchor="middle" font-size="13" fill="#d4561a">A</text></svg></button>
    <button class="btn"><svg class="i22"><use href="#t-pic"/></svg></button>
    <button class="btn"><svg class="i22"><use href="#t-panel"/></svg></button>
    <button class="btn on" aria-label="Tablo"><svg class="i24"><use href="#t-table"/></svg></button>
    <div class="hsep"></div>
    <button class="btn"><svg class="i22"><use href="#t-line"/></svg></button>
    <button class="btn"><svg class="i22"><use href="#t-shape"/></svg></button>
    <button class="btn"><svg class="i22"><use href="#t-bar"/></svg></button>
    <button class="btn"><svg class="i22"><use href="#t-zip"/></svg></button>
    <div class="hsep"></div>
    <button class="btn"><svg class="i22"><use href="#t-chart"/></svg></button>
    <button class="btn"><svg class="i22"><use href="#t-sum"/></svg></button>
    <div class="hsep"></div>
    <button class="btn"><svg class="i22"><use href="#t-info"/></svg></button>
    <button class="btn"><svg class="i22"><use href="#t-break"/></svg></button>
    <button class="btn"><svg class="i22"><use href="#t-xl"/></svg></button>
    <button class="btn"><svg class="i22"><use href="#t-xb"/></svg></button>
    <div class="hsep"></div>
    <button class="btn"><svg class="i22"><use href="#t-sub"/></svg></button>
    <button class="btn last"><svg class="i16"><use href="#t-sub"/></svg></button>
  </aside>
  <div class="tip">Tablo</div>

  <div class="work d-flex flex-grow-1 minw0 minh0">
    <section class="center d-flex flex-column flex-grow-1 minw0">
      <div class="tabstrip"><div class="doctab d-flex align-items-center justify-content-between"><span>xtraReport1*</span><button class="btn" aria-label="Kapat"><svg width="7" height="7" viewBox="0 0 7 7"><path d="m0 0 7 7M7 0 0 7" stroke="#222" stroke-width="1.500"/></svg></button></div></div>
      <div class="docframe d-flex flex-column flex-grow-1 minh0">
        <div class="ruler-row d-flex align-items-center">
          <div class="corner align-self-stretch d-flex align-items-center justify-content-center"><svg width="6" height="6" viewBox="0 0 6 6"><path d="m0 0 5 5M5.500 1v4.500H1" stroke="#fff" fill="none"/></svg></div>
          <div class="hrule d-flex"><span><b>1</b></span><span><b>2</b></span><span><b>3</b></span><span><b>4</b></span><span><b>5</b></span><span><b>6</b></span><span><b>7</b></span><span><b>8</b></span></div>
        </div>
        <div class="d-flex flex-grow-1 minh0">
          <div class="vrule">
            <div class="vseg z175"><b>1</b></div><div class="ham z21"></div><div class="vseg z3"></div><div class="ham z21"></div><div class="z21"></div><div class="vseg z26"></div><div class="ham z21"></div><div class="vseg z96"><b>1</b></div><div class="ham z21"></div><div class="vseg z26"></div>
          </div>
          <div class="canvas flex-grow-1 minw0">
            <div class="sheet">
              <div class="band"><svg width="8" height="8"><use href="#tri"/></svg><svg class="i16"><use href="#phd"/></svg>PageHeader [Sayfa Bandı]</div>
              <div class="zone z175">
                <div class="ctl" style="left:54px;top:8px;width:257px;height:17px"><span>[]</span><svg><use href="#db"/></svg></div>
                <div class="ctl" style="left:54px;top:24px;width:257px;height:17px"><span>[]</span><svg><use href="#db"/></svg></div>
                <div class="ctl" style="left:54px;top:40px;width:257px;height:41px"><span>[]</span><svg><use href="#db"/></svg></div>
                <div class="ctl tight" style="left:54px;top:82px;width:161px;height:15px">VD:[Fatura Bilgileri.Vergi Dairesi</div>
                <div class="ctl" style="left:223px;top:82px;width:96px;height:16px"><span>[]</span><svg><use href="#db"/></svg></div>
                <div class="ctl tight" style="left:54px;top:104px;width:161px;height:16px">VN:[Fatura Bilgileri.Vergi Numar</div>
                <div class="ctl" style="left:222px;top:104px;width:96px;height:16px"><span>[]</span><svg><use href="#db"/></svg></div>
                <div class="position-absolute d-flex dip" style="left:54px;top:161px">
                  <div class="dc" style="width:65px">Dip İskontolar</div><div class="dc" style="width:31px">[]<svg><use href="#db"/></svg></div><div class="dc" style="width:32px">[]<svg><use href="#db"/></svg></div><div class="dc" style="width:32px">[]<svg><use href="#db"/></svg></div><div class="dc" style="width:31px">[]<svg><use href="#db"/></svg></div><div class="dc" style="width:96px">Ödeme</div><div class="dc" style="width:56px">[]<svg><use href="#db"/></svg></div>
                </div>
                <div class="position-absolute bg-white border border-dark" style="left:551px;top:8px;width:216px;height:40px">
                  <svg width="214" height="38" viewBox="0 0 642 114"><path d="M58 0h5v90h-5zM70 0h5v90h-5zM93 0h10v66H93zM108 0h6v66h-6zM132 0h12v66h-12zM150 0h6v66h-6zM171 0h12v66h-12zM189 0h6v66h-6zM213 0h12v66h-12zM231 0h6v66h-6zM252 0h12v66h-12zM270 0h6v66h-6zM294 0h13v66h-13zM310 0h5v66h-5zM322 0h5v90h-5zM333 0h6v90h-6zM345 0h18v66h-18zM375 0h6v66h-6zM387 0h15v66h-15zM414 0h6v66h-6zM426 0h18v66h-18zM456 0h4v66h-4zM465 0h18v66h-18zM495 0h6v66h-6zM507 0h18v66h-18zM534 0h6v66h-6zM546 0h18v66h-18zM576 0h6v66h-6zM588 0h5v90h-5zM600 0h4v90h-4z"/><g font-size="36" font-family="Liberation Sans"><text x="36" y="105">0</text><text x="135" y="105">000000</text><text x="408" y="105">000000</text></g><svg x="610" y="3" width="30" height="33"><use href="#db"/></svg></svg>
                </div>
                <table class="info" style="left:584px;top:56px;width:183px"><colgroup><col style="width:87px"><col></colgroup><tr><td>Lokasyon</td><td><div class="d-flex justify-content-between">[]<svg><use href="#db"/></svg></div></td></tr><tr><td>Fiş No</td><td><div class="d-flex justify-content-between">[]<svg><use href="#db"/></svg></div></td></tr></table>
                <table class="info" style="left:582px;top:88px;width:185px"><colgroup><col style="width:88px"><col></colgroup><tr><td>Tarih</td><td><div class="d-flex justify-content-between">[]<svg><use href="#db"/></svg></div></td></tr><tr><td>Belge No</td><td><div class="d-flex justify-content-between">[]<svg><use href="#db"/></svg></div></td></tr><tr><td>İrsaliye No</td><td><div class="d-flex justify-content-between">[]<svg><use href="#db"/></svg></div></td></tr><tr><td>İrsaliye Tarihi</td><td><div class="d-flex justify-content-between">[]<svg><use href="#db"/></svg></div></td></tr><tr><td>Personel Kodu</td><td><div class="d-flex justify-content-between">[]<svg><use href="#db"/></svg></div></td></tr></table>
              </div>
              <div class="band"><svg width="8" height="8"><use href="#tri"/></svg><svg class="i16"><use href="#page"/></svg>Detail</div>
              <div class="zone z3"></div>
              <div class="band"><svg width="8" height="8"><use href="#tri"/></svg><svg class="i16"><use href="#clip"/></svg>DetailReport - "Ürün Hareketleri"</div>
              <div class="band sub b20"><svg width="8" height="8"><use href="#tri"/></svg><svg class="i16"><use href="#clipo"/></svg>ReportHeader</div>
              <div class="zone z26">
                <table class="rtab"><colgroup><col><col><col><col><col><col><col><col><col><col><col><col><col><col><col></colgroup><tr><th>Ürün Kod</th><th>Ürün Açıklaması</th><th>Miktar</th><th>Birim</th><th>Miktar2</th><th>Birim2</th><th>B.Fiyatı</th><th>İsk1</th><th>İsk2</th><th>İsk3</th><th>İsk4</th><th>İsk5</th><th>Kdv</th><th>Tutar</th><th>Net Tutar</th></tr></table>
              </div>
              <div class="band sub b20"><svg width="8" height="8"><use href="#tri"/></svg><svg class="i16"><use href="#ghd"/></svg>GroupHeader1</div>
              <div class="zone z96">
                <svg class="position-absolute" style="left:285px;top:6px" width="11" height="11" viewBox="0 0 11 11"><path d="M.5.5h10v10H.5z" fill="#fff" stroke="#000"/><path d="m4 3 3 2.500L4 8" fill="none" stroke="#000" stroke-width="1.300"/></svg>
                <div class="tcells d-flex"><div>Beden Kod[Ürün</div><div>tableCell2</div><div>tableCell3</div></div>
                <div class="redbox" style="left:171px;top:16px;width:366px;height:33px"></div>
                <span class="hnd" style="left:168px;top:31px"></span><span class="hnd" style="left:299px;top:31px"></span>
              </div>
              <div class="band sub"><svg width="8" height="8"><use href="#tri"/></svg><svg class="i16"><use href="#page"/></svg>Detail1</div>
              <div class="zone z26">
                <table class="rtab"><colgroup><col><col><col><col><col><col><col><col><col><col><col><col><col><col><col></colgroup><tr id="drow"></tr></table>
              </div>
            </div>
          </div>
          <div class="sb d-flex flex-column"><div class="arr"><svg width="10" height="5"><use href="#up"/></svg></div><div class="thumb t245"></div><div class="arr mt-auto"><svg width="10" height="5"><use href="#dn"/></svg></div></div>
        </div>
        <div class="split"><i></i></div>
        <div class="tray"><div class="d-flex align-items-center gap-1"><svg class="i16"><use href="#gear"/></svg>clsDatasetCustomization1</div></div>
        <div class="modes d-flex align-items-center">
          <button class="btn on"><svg class="i16"><use href="#design"/></svg>Dizayn Edici</button>
          <span class="bar ms-1 me-2"></span>
          <button class="btn me-2"><svg class="i16"><use href="#prev"/></svg>Ön İzleme</button>
          <button class="btn me-2"><svg class="i16"><use href="#html"/></svg>HTML Görünümü</button>
          <span class="bar me-2"></span>
          <button class="btn me-2"><svg class="i16"><use href="#scr"/></svg>Komut Dosyaları</button>
          <span class="bar me-2"></span>
          <span>tableRow1.tableCell1 { Loc:0,0 Boyut:125,25 }</span>
          <span class="ms-auto me-1">100%</span>
          <button class="btn round mx-1" aria-label="Uzaklaştır"><svg width="8" height="8" viewBox="0 0 8 8"><path d="M0 4h8" stroke="#444" stroke-width="2"/></svg></button>
          <input class="zoomr" type="range" aria-label="Yakınlık" value="50">
          <button class="btn round ms-1 me-2" aria-label="Yakınlaştır"><svg width="8" height="8" viewBox="0 0 8 8"><path d="M0 4h8M4 0v8" stroke="#444" stroke-width="2"/></svg></button>
        </div>
      </div>
      <div class="pane d-flex flex-column grouping">
        <div class="phead d-flex align-items-center"><span class="flex-grow-1">Grupla ve Sırala</span><svg width="9" height="9"><use href="#pin"/></svg><svg width="9" height="9" class="ms-3"><use href="#cls"/></svg></div>
        <div class="btnbar actions d-flex align-items-center">
          <button class="btn"><svg class="i16"><use href="#addg"/></svg>Bir Grup Ekle</button><button class="btn"><svg class="i16"><use href="#adds"/></svg>Bir Sıralama Ekle</button><button class="btn" disabled><svg class="i14"><use href="#delx"/></svg>Sil</button><span class="vsep"></span><button class="btn" disabled><svg class="i16"><use href="#cu"/></svg>Yukarı Taşı</button><button class="btn" disabled><svg class="i16"><use href="#cd"/></svg>Aşağı Taşı</button>
        </div>
        <div class="inset bg-white flex-grow-1"><table class="grp"><tr><th>Alan Adı</th><th>Sıralama Düzeni</th><th>Üst Bilgiyi Göster</th><th>Alt Bilgiyi Göster</th><th></th></tr></table></div>
        <div class="ptabs d-flex"><button class="btn on"><svg class="i16"><use href="#grp"/></svg>Grupla ve Sırala</button><button class="btn"><svg class="i16"><use href="#scre"/></svg>Komut Dosyası Hataları</button><span class="vsep"></span></div>
      </div>
    </section>

    <aside class="side d-flex flex-column">
      <div class="pane d-flex flex-column fields">
        <div class="phead d-flex align-items-center"><span class="flex-grow-1">Alan Listesi</span><svg width="9" height="9"><use href="#max"/></svg><svg width="9" height="9" class="mx-3"><use href="#pin"/></svg><svg width="9" height="9"><use href="#cls"/></svg></div>
        <div class="inset treebox d-flex flex-grow-1 position-relative minh0">
          <ul class="tree flex-grow-1" id="tree"></ul>
          <div class="sb d-flex flex-column"><div class="arr"><svg width="10" height="5"><use href="#up"/></svg></div><div class="thumb t31"></div><div class="arr mt-auto"><svg width="10" height="5"><use href="#dn"/></svg></div></div>
          <div class="redbox" style="left:52px;top:107px;right:10px;height:22px"></div>
        </div>
        <div class="ptabs d-flex"><button class="btn"><svg class="i16"><use href="#rg"/></svg>Rapor Gezgini</button><button class="btn on"><svg class="i16"><use href="#fl"/></svg>Alan Listesi</button></div>
      </div>
      <div class="pane d-flex flex-column flex-grow-1 minh0">
        <div class="phead d-flex align-items-center"><span class="flex-grow-1">Izgara Özellikleri</span><svg width="9" height="9"><use href="#max"/></svg><svg width="9" height="9" class="mx-3"><use href="#pin"/></svg><svg width="9" height="9"><use href="#cls"/></svg></div>
        <select class="sel w-100 objsel" aria-label="Nesne"><option>tableCell1 &nbsp; Tablo Hücresi</option></select>
        <div class="btnbar d-flex align-items-center ps-1"><button class="btn sorton" aria-label="Kategori"><svg width="18" height="18"><use href="#catg"/></svg></button><button class="btn ms-1" aria-label="Alfabetik"><svg width="18" height="20" viewBox="0 0 18 20" font-family="Liberation Sans" font-weight="700" font-size="10"><text x="1" y="9" fill="#2a66d0">A</text><text x="1" y="18" fill="#9b1c1c">Z</text><path d="M13 2v12" stroke="#000"/><path d="M10 12h6l-3 6z"/></svg></button></div>
        <div class="inset d-flex flex-grow-1 minh0">
          <div class="flex-grow-1 overflow-hidden bg-white"><table class="pg"><colgroup><col><col><col></colgroup><tbody id="pgb"></tbody></table></div>
          <div class="sb d-flex flex-column"><div class="arr"><svg width="10" height="5"><use href="#up"/></svg></div><div class="thumb t130"></div><div class="arr mt-auto"><svg width="10" height="5"><use href="#dn"/></svg></div></div>
        </div>
        <div class="split"><i></i></div>
        <div class="desc inset rounded-1"></div>
      </div>
    </aside>
  </div>
</main>
<footer class="status">Tablo</footer>
<script src="https://cdn.jsdelivr.net/npm/bootstrap@5.3.0/dist/js/bootstrap.bundle.min.js"></script>
<script>
const use = (id, w, h) => `<svg width="${w}" height="${h}" class="${w === 16 ? 'i16' : ''}"><use href="#${id}"/></svg>`;

const detail = ['[Ürün Hareketleri.Ü', '[Ürün Hareketleri.Ürün Açıklaması]', '[Ürün H', '[Ürün H', '[Ürün H', '[Ürün H', '[Ürün H', '[Ü', '[Ü', '[Ü', '[Ü', '[Ü', '[Ürün H', '[Ürün Har', '[Ürün Har'];
document.getElementById('drow').innerHTML = detail.map(t => `<td><div class="d-flex justify-content-between"><span>${t}</span>${use('db', 10, 11)}</div></td>`).join('');

const fieldIcon = t => `<svg class="i16" viewBox="0 0 16 16"><use href="#fld"/><text x="8" y="13" text-anchor="middle" font-size="${t === 'ab' ? 9 : 7}" font-weight="700" fill="#2f6fb3">${t}</text></svg>`;
const nodes = [[0, '-', 'dsb', 'İrsaliye'], [1, '+', 'tbl', 'İrsaliye Bilgileri'], [1, '+', 'tbl', 'KDV Matrah Dökümü'], [1, '-', 'tbl', 'Ürün Hareketleri'], [2, '+', 'tbl', 'Ürün Alanlar'], [2, '+', 'tbl', 'Ürün Promosyonları'], [2, '', 'ab', 'B:Beden Kod', 1], [2, '', 'ab', 'B:Beden Kod Açıklama'], [2, '', '123', 'Birim Fiyatı'], [2, '', 'ab', 'BLM:Bölüm Kod'], [2, '', 'ab', 'BLM:Bölüm Kod Açıklama'], [2, '', 'ab', 'Döviz'], [2, '', '123', 'Döviz Kur']];
document.getElementById('tree').innerHTML = nodes.map(([lv, ex, ic, t, sel]) =>
  '<li>' + '<i class="v"></i>'.repeat(lv) + `<i class="${lv ? 'vh' : 'h'}">${ex ? use('ex' + ex, 9, 9) : ''}</i>` +
  (ic === 'ab' || ic === '123' ? fieldIcon(ic) : use(ic, 16, 16)) + `<span class="${sel ? 'chosen' : ''}">${t}</span></li>`).join('');

const props = [['Bilgi'], ['(Veri Bağlantıları)', '', 17, 1], ['Çizgiler', '<b>String[] Dizisi</b>', 20, 1], ['Etiket', '', 17], ['Metin', '<b>tableCell1</b>', 17], ['Null Value Text', '', 17], ['Özet', 'Yok', 20, 1], ['Xlsx Biçimi Dizesi', '', 17], ['Davranış'], ['Açı', '0', 17], ['Bir Arada Tut', 'No', 20], ['Boş Değerleri İşle', 'Bırak', 20], ['Büyüyebilir', 'Yes', 20], ['Çok çizgili', 'No', 20], ['Daraltabilir', 'No', 20], ['Görünür', 'Yes', 20], ['İşlem Kopyalar', 'Bırak', 20], ['Komut Dosyaları', '(Etiket Komut Dosyaları)', 17, 1], ['Sözcük Kaydırma', 'Yes', 17]];
document.getElementById('pgb').innerHTML = props.map(([n, v, h, ex]) => h
  ? `<tr class="r${h}"><td class="ind"></td><th scope="row">${ex ? use('ex+', 9, 9) : ''}${n}</th><td>${v}</td></tr>`
  : `<tr class="cat r20"><td colspan="3"><div class="d-flex align-items-center justify-content-between pe-2">${n}${use('chev', 8, 8)}</div></td></tr>`).join('');
</script>
</body>
</html>
